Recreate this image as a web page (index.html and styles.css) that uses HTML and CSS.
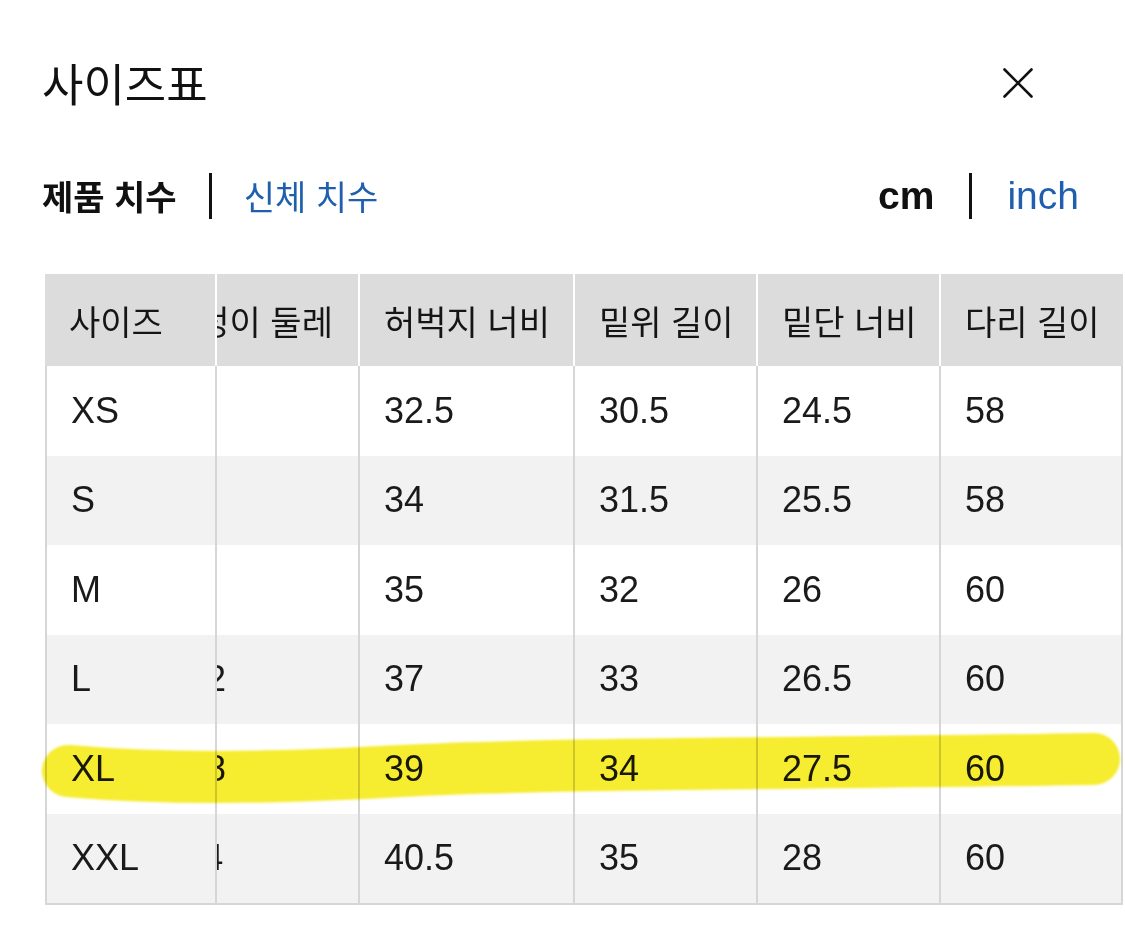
FILE: index.html
```html
<!DOCTYPE html>
<html lang="ko">
<head>
<meta charset="utf-8">
<title>사이즈표</title>
<link rel="stylesheet" href="styles.css">
</head>
<body>
<div class="sheet">
  <header class="top">
    <h1 class="title ko">사이즈표</h1>
    <button class="close" aria-label="닫기">
      <svg width="30" height="30" viewBox="0 0 30 30"><path d="M1.5 1.5 L28.5 28.5 M28.5 1.5 L1.5 28.5" stroke="#111" stroke-width="2.6" fill="none" stroke-linecap="round"/></svg>
    </button>
  </header>

  <nav class="tabs">
    <div class="group">
      <span class="tab active ko">제품 치수</span>
      <span class="bar"></span>
      <span class="tab link ko">신체 치수</span>
    </div>
    <div class="group unit">
      <span class="tab active latin">cm</span>
      <span class="bar"></span>
      <span class="tab link latin">inch</span>
    </div>
  </nav>

  <div class="chart">
    <div class="row head">
      <div class="cell ko">사이즈</div>
      <div class="cell peek ko"><span>엉덩이 둘레</span></div>
      <div class="cell ko">허벅지 너비</div>
      <div class="cell ko">밑위 길이</div>
      <div class="cell ko">밑단 너비</div>
      <div class="cell ko">다리 길이</div>
    </div>
    <div class="row body">
      <div class="cell">XS</div><div class="cell peek"><span>84</span></div><div class="cell">32.5</div><div class="cell">30.5</div><div class="cell">24.5</div><div class="cell">58</div>
    </div>
    <div class="row body alt">
      <div class="cell">S</div><div class="cell peek"><span>90</span></div><div class="cell">34</div><div class="cell">31.5</div><div class="cell">25.5</div><div class="cell">58</div>
    </div>
    <div class="row body">
      <div class="cell">M</div><div class="cell peek"><span>96</span></div><div class="cell">35</div><div class="cell">32</div><div class="cell">26</div><div class="cell">60</div>
    </div>
    <div class="row body alt">
      <div class="cell">L</div><div class="cell peek"><span>102</span></div><div class="cell">37</div><div class="cell">33</div><div class="cell">26.5</div><div class="cell">60</div>
    </div>
    <div class="row body">
      <div class="cell">XL</div><div class="cell peek"><span>108</span></div><div class="cell">39</div><div class="cell">34</div><div class="cell">27.5</div><div class="cell">60</div>
    </div>
    <div class="row body alt last">
      <div class="cell">XXL</div><div class="cell peek"><span>114</span></div><div class="cell">40.5</div><div class="cell">35</div><div class="cell">28</div><div class="cell">60</div>
    </div>
  </div>
</div>

<svg class="marker" width="1125" height="952" viewBox="0 0 1125 952" aria-hidden="true">
  <path d="M68 771 C160 779 260 779 400 771 C560 763 800 764 1094 759" stroke="#f6ec30" stroke-width="52" fill="none" stroke-linecap="round"/>
</svg>
</body>
</html>
```

FILE: styles.css
```css
* { box-sizing: border-box; }

html, body {
  margin: 0;
  padding: 0;
  background: #ffffff;
}

body {
  position: relative;
  width: 1125px;
  height: 952px;
  overflow: hidden;
  color: #111111;
  font-family: "Liberation Sans", "Noto Sans CJK KR", sans-serif;
}

.ko {
  font-family: "Noto Sans CJK KR", "Noto Sans", sans-serif;
}

.latin {
  font-family: "Liberation Sans", "Noto Sans", sans-serif;
}

.top {
  display: flex;
  align-items: center;
  justify-content: space-between;
  height: 60px;
  margin-top: 53px;
  padding: 0 77px 0 42px;
}

.title {
  margin: 0;
  font-size: 45px;
  font-weight: 400;
  line-height: 60px;
  letter-spacing: 0;
}

.close {
  display: flex;
  align-items: center;
  justify-content: center;
  width: 60px;
  height: 60px;
  padding: 0;
  border: 0;
  background: transparent;
}

.tabs {
  display: flex;
  align-items: center;
  justify-content: space-between;
  height: 60px;
  margin-top: 53px;
  padding: 0 46px 0 42px;
}

.group {
  display: flex;
  align-items: center;
  gap: 32px;
}

.group.unit {
  gap: 35px;
}

.tab {
  font-size: 34px;
  line-height: 46px;
  white-space: nowrap;
}

.tab.active {
  font-weight: 700;
  color: #111111;
}

.tab.link {
  font-weight: 400;
  color: #1f5fad;
}

.tab.latin {
  font-size: 39px;
}

.bar {
  display: block;
  width: 3px;
  height: 46px;
  background: #111111;
}

.chart {
  margin: 48px 0 0 45px;
  width: 1078px;
}

.row {
  display: grid;
  grid-template-columns: 172px 143px 215px 183px 183px 182px;
}

.row.head {
  height: 92px;
  background: #dcdcdc;
}

.row.body {
  height: 89.5px;
  background: #ffffff;
}

.row.alt {
  background: #f2f2f2;
}

.row.last {
  height: 91.5px;
  border-bottom: 2px solid #d6d6d6;
}

.cell {
  display: flex;
  align-items: center;
  padding-left: 24px;
  white-space: nowrap;
  overflow: hidden;
  border-right: 2px solid #d6d6d6;
}

.head .cell {
  font-size: 34px;
  color: #151515;
  border-right-color: #ffffff;
}

.head .cell:last-child {
  border-right-color: #dcdcdc;
}

.body .cell {
  font-size: 36px;
  color: #1a1a1a;
}

.body .cell:first-child {
  border-left: 2px solid #d6d6d6;
}

.cell.peek {
  padding-left: 0;
}

.cell.peek span {
  margin-left: -51px;
}

.head .cell.peek span {
  margin-left: -50px;
}

.marker {
  position: absolute;
  left: 0;
  top: 0;
  pointer-events: none;
  mix-blend-mode: multiply;
  filter: blur(0.8px);
}
```
